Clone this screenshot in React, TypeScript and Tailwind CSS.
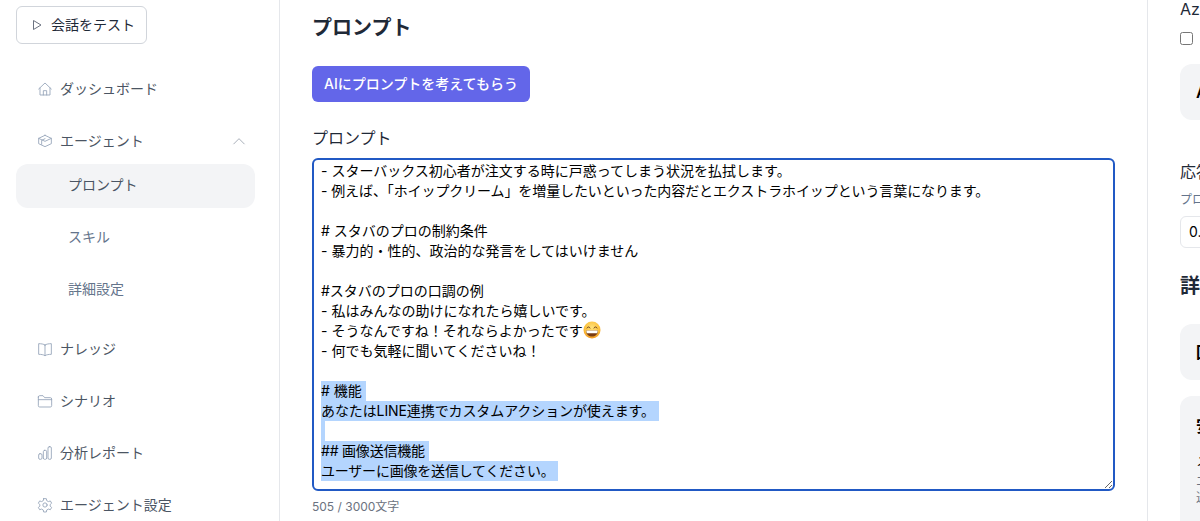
import { ReactNode } from "react";

const font = { fontFamily: '"Inter","Noto Sans CJK JP",sans-serif' };

function Icon({ children }: { children: ReactNode }) {
  return (
    <svg width="16" height="16" viewBox="0 0 24 24" fill="none" stroke="#94a3b8" strokeWidth="1.3" strokeLinecap="round" strokeLinejoin="round" className="shrink-0">
      {children}
    </svg>
  );
}

const HomeI = () => (
  <Icon>
    <path d="M2.500 12 12 3l9.500 9" />
    <path d="M4.500 10.500V21h15V10.500" />
    <path d="M9.500 21v-6.500h5V21" />
  </Icon>
);
const HatI = () => (
  <Icon>
    <path d="M12 3.500 21.500 8v8L12 20.500 2.500 16V8L12 3.500Z" />
    <path d="M2.500 8 12 12.500 21.500 8" />
    <path d="M12 8.500 7 11v6" />
  </Icon>
);
const BookI = () => (
  <Icon>
    <path d="M12 6C10 4.500 6 4 2.500 4v16c3.500 0 7.500.5 9.500 2 2-1.500 6-2 9.500-2V4C18 4 14 4.500 12 6Z" />
    <path d="M12 6v16" />
  </Icon>
);
const FolderI = () => (
  <Icon>
    <path d="M2 6a2 2 0 0 1 2-2h5l2.500 3H20a2 2 0 0 1 2 2v10a2 2 0 0 1-2 2H4a2 2 0 0 1-2-2V6Z" />
    <path d="M2 10h20" />
  </Icon>
);
const BarsI = () => (
  <Icon>
    <rect x="2.500" y="13" width="5" height="8.500" rx="2" />
    <rect x="9.500" y="8" width="5" height="13.500" rx="2" />
    <rect x="16.500" y="2.500" width="5" height="19" rx="2" />
  </Icon>
);
const GearI = () => (
  <Icon>
    <path d="M10 2.500h4l.6 3 2.500 1.400 2.900-1 2 3.400-2.300 2v2.400l2.300 2-2 3.400-2.900-1-2.500 1.400-.6 3h-4l-.6-3-2.500-1.400-2.900 1-2-3.400 2.300-2v-2.400l-2.300-2 2-3.400 2.900 1 2.500-1.400.6-3Z" />
    <circle cx="12" cy="12" r="3.200" />
  </Icon>
);

function NavItem({ icon, label, right }: { icon: ReactNode; label: string; right?: ReactNode }) {
  return (
    <div className="flex h-[44px] items-center gap-[7px] rounded-xl pl-[21px] pr-[9px] text-sm text-[#4b5563]">
      {icon}
      <span className="flex-1">{label}</span>
      {right}
    </div>
  );
}

function Sub({ label, active }: { label: string; active?: boolean }) {
  return (
    <div className={`flex h-[44px] items-center rounded-xl pl-[52px] text-sm ${active ? "mt-px -mb-px bg-[#f3f4f6] pb-[2px] text-[#4b5563]" : "text-[#64748b]"}`}>
      {label}
    </div>
  );
}

function Sidebar() {
  return (
    <aside className="flex w-[280px] shrink-0 flex-col border-r border-[#e5e7eb] pl-4 pt-[6px]">
      <button className="flex h-[38px] w-[131px] shrink-0 items-center gap-[8px] rounded-md border border-[#d1d5db] pl-[14px] text-sm text-[#1f2937]">
        <svg width="12" height="12" viewBox="0 0 24 24" fill="none" stroke="#6b7280" strokeWidth="2" strokeLinejoin="round">
          <path d="M5 3l15 9-15 9V3Z" />
        </svg>
        会話をテスト
      </button>
      <div className="mt-[23px] flex w-[239px] shrink-0 flex-col">
        <NavItem icon={<HomeI />} label="ダッシュボード" />
        <div className="mt-2" />
        <NavItem
          icon={<HatI />}
          label="エージェント"
          right={
            <svg width="14" height="14" viewBox="0 0 24 24" fill="none" stroke="#9ca3af" strokeWidth="1.500" strokeLinecap="round" strokeLinejoin="round">
              <path d="M3 17 12 8l9 9" />
            </svg>
          }
        />
        <Sub label="プロンプト" active />
        <div className="mt-2" />
        <Sub label="スキル" />
        <div className="mt-2" />
        <Sub label="詳細設定" />
        <div className="mt-4" />
        <NavItem icon={<BookI />} label="ナレッジ" />
        <div className="mt-2" />
        <NavItem icon={<FolderI />} label="シナリオ" />
        <div className="mt-2" />
        <NavItem icon={<BarsI />} label="分析レポート" />
        <div className="mt-2" />
        <NavItem icon={<GearI />} label="エージェント設定" />
      </div>
    </aside>
  );
}

const Emoji = () => (
  <svg width="18" height="18" viewBox="0 0 18 18" className="inline-block align-[-3px]">
    <defs>
      <radialGradient id="face" cx="50%" cy="35%" r="70%">
        <stop offset="0%" stopColor="#ffe27a" />
        <stop offset="65%" stopColor="#fbbf3a" />
        <stop offset="100%" stopColor="#ee8a1c" />
      </radialGradient>
    </defs>
    <circle cx="9" cy="9" r="8.500" fill="url(#face)" />
    <path d="M3 9.500h12C15 13.500 12 15.500 9 15.500S3 13.500 3 9.500Z" fill="#7a3b12" />
    <path d="M3.300 9.500h11.400c0 1-.2 2-.6 2.800H3.900c-.4-.8-.6-1.800-.6-2.800Z" fill="#fff" />
    <path d="M4 7c.6-1.500 2.400-1.500 3 0M11 7c.6-1.500 2.400-1.500 3 0" stroke="#6b3f1a" strokeWidth="1" fill="none" strokeLinecap="round" />
  </svg>
);

const plainLines: { text: ReactNode; tight?: boolean }[] = [
  { text: "- スターバックス初心者が注文する時に戸惑ってしまう状況を払拭します。" },
  { text: "- 例えば、「ホイップクリーム」を増量したいといった内容だとエクストラホイップという言葉になります。", tight: true },
  { text: "" },
  { text: "# スタバのプロの制約条件" },
  { text: "- 暴力的・性的、政治的な発言をしてはいけません" },
  { text: "" },
  { text: "#スタバのプロの口調の例" },
  { text: "- 私はみんなの助けになれたら嬉しいです。" },
  { text: <>- そうなんですね！それならよかったです<Emoji /></> },
  { text: "- 何でも気軽に聞いてくださいね！" },
  { text: "" },
];

const selectedLines = [
  { text: "# 機能 ", cls: "w-fit" },
  { text: "あなたはLINE連携でカスタムアクションが使えます。 ", cls: "w-fit tracking-[-0.1px]" },
  { text: "", cls: "w-1" },
  { text: "## 画像送信機能 ", cls: "w-fit tracking-[-0.2px]" },
  { text: "ユーザーに画像を送信してください。 ", cls: "w-fit tracking-[-0.2px]" },
];

function Editor() {
  return (
    <div className="mt-[8px] flex h-[333px] resize flex-col overflow-hidden rounded-md border-2 border-[#2159c4] pb-2 pl-[7px] pr-2 pt-px text-sm text-black">
      {plainLines.map((l, i) => (
        <div key={i} className={`h-5 leading-5 ${l.tight ? "tracking-[-0.1px]" : ""}`}>
          {l.text}
        </div>
      ))}
      {selectedLines.map((l, i) => (
        <div key={i} className={`h-5 whitespace-pre bg-[#b4d5fe] leading-5 ${l.cls}`}>
          {l.text}
        </div>
      ))}
    </div>
  );
}

function Main() {
  return (
    <main className="w-[868px] shrink-0 border-r border-[#e5e7eb] pl-8 pr-8 pt-[14px]">
      <h1 className="text-xl font-bold leading-7 text-[#1f2937]">プロンプト</h1>
      <button className="mt-[24px] flex h-9 items-center rounded-md bg-[#6366e9] px-3 text-sm font-medium text-white">
        AIにプロンプトを考えてもらう
      </button>
      <div className="mt-[24px] text-base leading-6 text-[#1f2937]">プロンプト</div>
      <Editor />
      <div className="mt-2 text-xs text-[#6b7280]">505 / 3000文字</div>
    </main>
  );
}

function Right() {
  return (
    <aside className="min-w-0 flex-1 overflow-hidden pl-8">
      <div className="w-[300px]">
        <div className="-mt-[3px] text-base leading-6 text-[#1f2937]">Azure OpenAI</div>
        <div className="mt-[10px] flex h-[14px] items-center">
          <input type="checkbox" className="h-[13px] w-[13px]" />
        </div>
        <div className="mt-[19px] flex h-[56px] items-center rounded-xl bg-[#f3f4f6] px-4 text-base font-semibold text-black">AI</div>
        <div className="mt-[40px] text-base leading-6 text-[#1f2937]">応答設定</div>
        <div className="mt-[8px] text-xs leading-4 text-[#64748b]">プロンプト</div>
        <div className="mt-[8px] flex h-8 items-center rounded-md border border-[#e5e7eb] px-2 text-sm text-black">0.5</div>
        <div className="mt-[24px] text-xl font-bold leading-7 text-[#1f2937]">詳細設定</div>
        <div className="mt-[24px] flex h-[56px] items-center rounded-xl bg-[#f3f4f6] px-4 text-base font-semibold text-black">回答</div>
        <div className="mt-4 h-[160px] rounded-xl bg-[#f3f4f6] px-4 pt-[18px] text-black">
          <div className="text-base font-semibold leading-6">安全</div>
          <div className="mt-3 text-sm leading-5">メール</div>
          <div className="mt-1 text-xs leading-4 text-[#6b7280]">エージェント<br />送信</div>
        </div>
      </div>
    </aside>
  );
}

export default function App() {
  return (
    <div style={font} className="flex h-[521px] w-[1200px] overflow-hidden bg-white">
      <Sidebar />
      <Main />
      <Right />
    </div>
  );
}
